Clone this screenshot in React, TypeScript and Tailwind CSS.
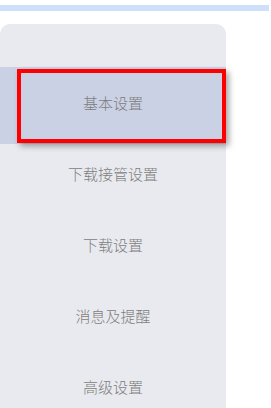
const items = ['基本设置', '下载接管设置', '下载设置', '消息及提醒', '高级设置'];

export default function App() {
  return (
    <div className="h-[408px] w-[271px] overflow-hidden bg-white" style={{ fontFamily: '"Noto Sans CJK SC", "Noto Sans", sans-serif' }}>
      <div className="mt-[5px] h-[6px] w-[269px] bg-[#cfe0fb]" />
      <div className="mt-[13px] w-[226px] rounded-t-[10px] bg-[#e9eaef] pt-[43px]">
        {items.map((label, i) => (
          <div key={label} className="relative flex h-[71px] items-center justify-center">
            {i === 0 && (
              <>
                <div className="absolute inset-x-0 top-0 bottom-[-6px] bg-[#cbd1e5]" />
                <div className="absolute left-[17px] right-0 top-[2px] bottom-[-5px] border-[4px] border-[#f00] shadow-[3px_3px_6px_rgba(0,0,0,0.35)]" />
              </>
            )}
            <span className="relative text-[15px] font-light leading-none text-[#7d7d7d]">{label}</span>
          </div>
        ))}
      </div>
    </div>
  );
}
